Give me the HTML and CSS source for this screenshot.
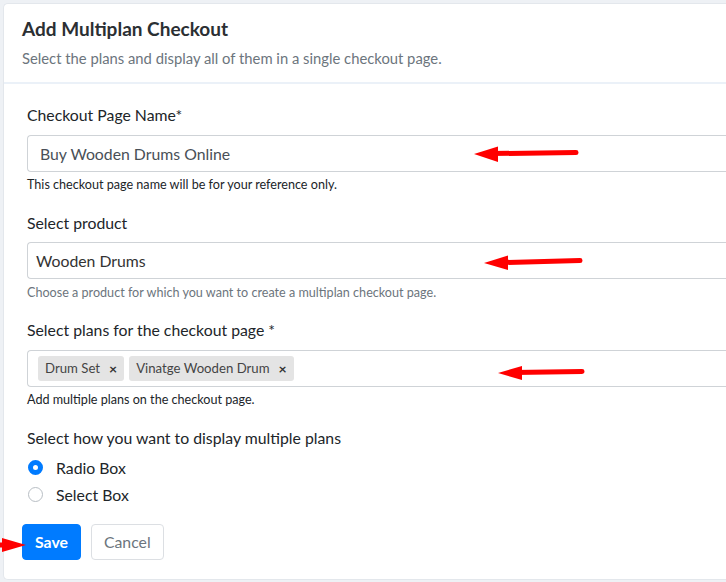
FILE: index.html
```html
<!DOCTYPE html>
<html lang="en">
<head>
<meta charset="utf-8">
<title>Add Multiplan Checkout</title>
<link rel="stylesheet" href="styles.css">
</head>
<body>
<div class="card">
  <div class="card-header">
    <h1 class="title">Add Multiplan Checkout</h1>
    <p class="subtitle">Select the plans and display all of them in a single checkout page.</p>
  </div>
  <div class="card-body">
    <div class="group">
      <label class="label">Checkout Page Name*</label>
      <div class="input input-name">Buy Wooden Drums Online</div>
      <div class="help">This checkout page name will be for your reference only.</div>
    </div>
    <div class="group">
      <label class="label">Select product</label>
      <div class="input input-select">Wooden Drums</div>
      <div class="help muted">Choose a product for which you want to create a multiplan checkout page.</div>
    </div>
    <div class="group">
      <label class="label">Select plans for the checkout page *</label>
      <div class="input input-multi">
        <span class="tag">Drum Set <span class="tag-x">×</span></span>
        <span class="tag">Vinatge Wooden Drum <span class="tag-x">×</span></span>
      </div>
      <div class="help">Add multiple plans on the checkout page.</div>
    </div>
    <div class="label label-radios">Select how you want to display multiple plans</div>
    <div class="radio-row"><span class="radio checked"></span><span class="radio-label">Radio Box</span></div>
    <div class="radio-row"><span class="radio"></span><span class="radio-label">Select Box</span></div>
    <div class="actions">
      <button class="btn btn-primary">Save</button>
      <button class="btn btn-light">Cancel</button>
    </div>
  </div>
</div>
<svg class="annotations" width="726" height="582" viewBox="0 0 726 582">
  <g fill="#ff0000" stroke="#ff0000">
    <line x1="490" y1="153.6" x2="576" y2="152.6" stroke-width="5" stroke-linecap="round"/>
    <polygon points="474,154 498,146.5 498,162" stroke="none"/>
    <line x1="500" y1="262.6" x2="580" y2="260.6" stroke-width="5" stroke-linecap="round"/>
    <polygon points="484,263 508,255.5 508,270" stroke="none"/>
    <line x1="514" y1="372.6" x2="582" y2="371.4" stroke-width="5" stroke-linecap="round"/>
    <polygon points="498,373 522,366 522,380" stroke="none"/>
    <line x1="-10" y1="545" x2="8" y2="545" stroke-width="5"/>
    <polygon points="26,545 2,538 2,552" stroke="none"/>
  </g>
</svg>
</body>
</html>
```
FILE: styles.css
```css
html, body {
  margin: 0;
  padding: 0;
}
body {
  background: #eef1f5;
  font-family: "Lato", "Open Sans", sans-serif;
  color: #212529;
  width: 726px;
  height: 582px;
  overflow: hidden;
  position: relative;
}
.card {
  margin: 3px 0 0 3px;
  width: 723px;
  height: 577px;
  background: #ffffff;
  border: 1px solid #e3e7ec;
  border-right: none;
  border-radius: 5px 0 0 5px;
  box-sizing: border-box;
  overflow: hidden;
}
.card-header {
  height: 80px;
  box-sizing: border-box;
  padding: 12px 18px 0;
  border-bottom: 2px solid #ebf1f8;
}
.title {
  margin: 0;
  font-size: 19px;
  line-height: 25px;
  font-weight: 700;
  color: #2b2f33;
}
.subtitle {
  margin: 7px 0 0;
  font-size: 14.8px;
  line-height: 20px;
  color: #6c757d;
  white-space: nowrap;
}
.card-body {
  padding: 20px 0 0 23px;
}
.group {
  margin-bottom: 18.5px;
}
.label {
  display: block;
  font-size: 15.8px;
  line-height: 22px;
  color: #212529;
}
.input {
  margin-top: 8.5px;
  height: 37px;
  box-sizing: border-box;
  border: 1px solid #cfd3d7;
  border-right: none;
  border-radius: 4px 0 0 4px;
  display: flex;
  align-items: center;
  font-size: 15.8px;
  color: #495057;
}
.input-name { padding-left: 12px; }
.input-select { padding-left: 8px; color: #333; }
.input-multi {
  padding-left: 10px;
  gap: 5px;
}
.tag {
  display: inline-flex;
  align-items: center;
  height: 25px;
  padding: 0 7px;
  background: #e4e4e4;
  border-radius: 3px;
  font-size: 13.2px;
  color: #444;
}
.tag-x {
  margin-left: 9px;
  font-weight: 700;
  font-size: 14px;
  color: #333;
}
.help {
  margin-top: 5.5px;
  font-size: 12.6px;
  line-height: 16px;
  color: #212529;
  white-space: nowrap;
}
.help.muted { color: #6c757d; }
.label-radios {
  margin-bottom: 5px;
}
.radio-row {
  height: 27px;
  display: flex;
  align-items: center;
}
.radio {
  width: 15px;
  height: 15px;
  box-sizing: border-box;
  border-radius: 50%;
  border: 1px solid #b8bec4;
  background: #fff;
  margin-left: 1px;
  margin-right: 13px;
}
.radio.checked {
  border: 5px solid #007bff;
  background: #fff;
}
.radio-label {
  font-size: 15.8px;
  color: #212529;
}
.actions {
  margin: 16px 0 0 -5px;
  display: flex;
  gap: 10px;
}
.btn {
  height: 36px;
  box-sizing: border-box;
  border-radius: 4px;
  font-family: inherit;
  font-size: 15.8px;
  padding: 0 12px;
  cursor: pointer;
}
.btn-primary {
  background: #007bff;
  border: 1px solid #007bff;
  color: #fff;
  font-weight: 700;
}
.btn-light {
  background: #fff;
  border: 1px solid #dcdfe3;
  color: #6c757d;
}
.annotations {
  position: absolute;
  left: 0;
  top: 0;
  pointer-events: none;
}
```
